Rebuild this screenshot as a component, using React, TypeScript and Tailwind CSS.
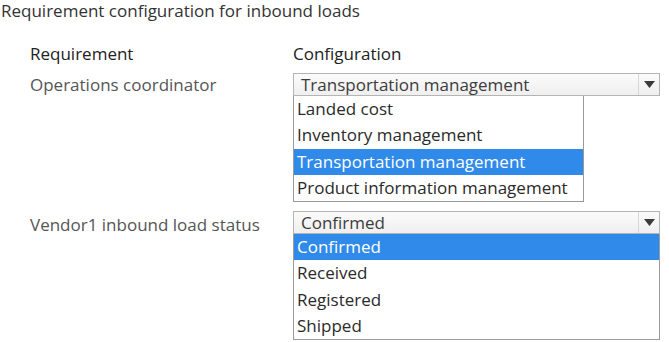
import React from 'react';

interface DropdownProps {
  value: string;
  options: string[];
  selected: number;
  listWidth: string;
}

const Dropdown: React.FC<DropdownProps> = ({ value, options, selected, listWidth }) => {
  return (
    <div className="flex flex-col">
      {/* closed select */}
      <div className="flex h-[23px] w-[367px] border border-[#b4b4b4] bg-gradient-to-b from-[#fbfbfb] to-[#efefef]">
        <div className="flex-1 pl-[7px] leading-[21px] text-[#3c3c3c]">{value}</div>
        <div className="flex w-[21px] items-center justify-center border-l border-[#d6d6d6]">
          <svg width="11" height="7" viewBox="0 0 11 7">
            <path d="M0 0 L11 0 L5.5 7 Z" fill="#3a3a3a" />
          </svg>
        </div>
      </div>
      {/* open list */}
      <div className={`flex flex-col border border-t-0 border-[#9a9a9a] bg-white ${listWidth}`}>
        {options.map((opt, i) => (
          <div
            key={opt}
            className={
              i === selected
                ? 'h-[26.3px] bg-[#2f8ae9] pl-[3px] leading-[25px] text-white'
                : 'h-[26.3px] pl-[3px] leading-[25px] text-[#2a2a2a]'
            }
          >
            {opt}
          </div>
        ))}
      </div>
    </div>
  );
};

const App: React.FC = () => {
  return (
    <div className="h-[342px] w-[669px] overflow-hidden bg-white font-['Open_Sans',sans-serif] text-[17px]">
      <h1 className="pl-[1px] pt-[1px] leading-[20px] text-[#333]">Requirement configuration for inbound loads</h1>

      <div className="mt-[22px] grid grid-cols-[263px_1fr] pl-[30px]">
        <div className="leading-[21px] text-[#222]">Requirement</div>
        <div className="leading-[21px] text-[#222]">Configuration</div>

        <div className="mt-[11px] leading-[20px] text-[#555]">Operations coordinator</div>
        <div className="mt-[9px]">
          <Dropdown
            value="Transportation management"
            options={['Landed cost', 'Inventory management', 'Transportation management', 'Product information management']}
            selected={2}
            listWidth="w-[291px]"
          />
        </div>

        <div className="mt-[13px] leading-[20px] text-[#555]">Vendor1 inbound load status</div>
        <div className="mt-[9px]">
          <Dropdown
            value="Confirmed"
            options={['Confirmed', 'Received', 'Registered', 'Shipped']}
            selected={0}
            listWidth="w-[367px]"
          />
        </div>
      </div>
    </div>
  );
};

export default App;
